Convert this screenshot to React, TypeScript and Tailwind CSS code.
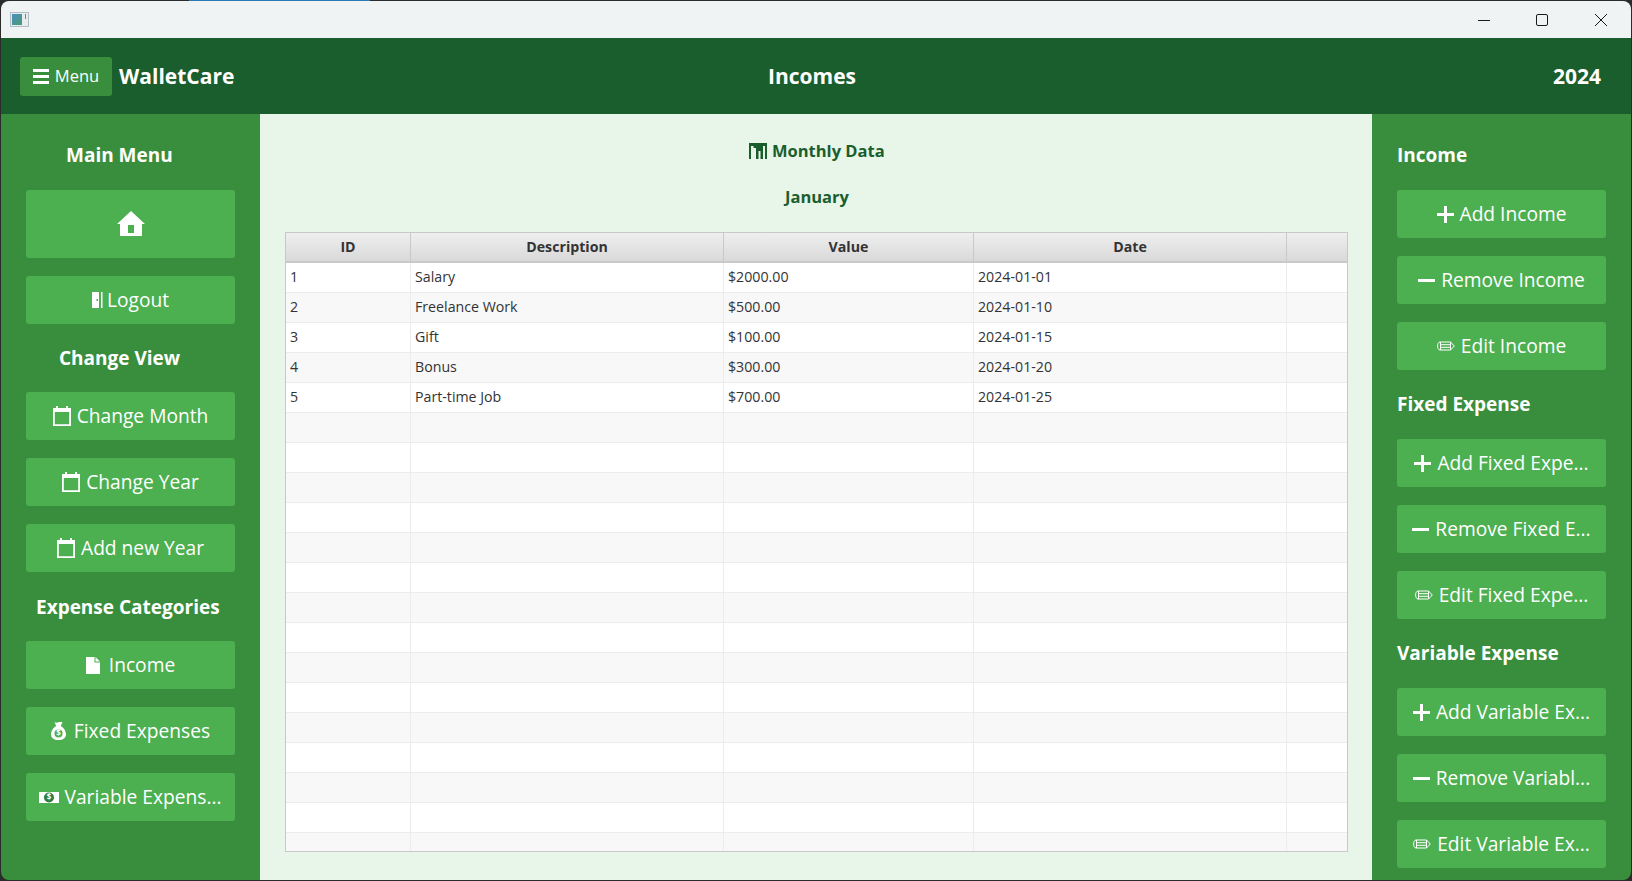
import type { ReactNode } from 'react';

const font = { fontFamily: '"Open Sans", "Noto Sans", sans-serif' };

type IconName = 'home' | 'door' | 'calendar' | 'file' | 'bag' | 'cash' | 'plus' | 'minus' | 'pencil';

function Icon({ name }: { name: IconName }) {
  switch (name) {
    case 'home':
      return (
        <svg width="28" height="26" viewBox="0 0 28 26" fill="#fff">
          <path fillRule="evenodd" d="M14 0 28 13h-3v12H3V13H0ZM11 14v8h6v-8Z" />
        </svg>
      );
    case 'door':
      return (
        <svg width="11" height="16" viewBox="0 0 11 16" fill="#fff">
          <path fillRule="evenodd" d="M0 0h7v16H0ZM4.500 7v2h1.500V7ZM9 0h1.500v16H9Z" />
        </svg>
      );
    case 'calendar':
      return (
        <svg width="18" height="20" viewBox="0 0 18 20" fill="#fff">
          <path fillRule="evenodd" d="M3 0h2v2h8V0h2v2h3v18H0V2h3ZM1.800 6v12.200h14.400V6Z" />
        </svg>
      );
    case 'file':
      return (
        <svg width="14" height="17" viewBox="0 0 14 17" fill="#fff">
          <path d="M0 0h8.500v5.500H14V17H0ZM9.500 0 14 4.500H9.500Z" />
        </svg>
      );
    case 'bag':
      return (
        <svg width="15" height="18" viewBox="0 0 15 18">
          <path fill="#fff" d="M3.500 0c1 .8 2.500.8 4 .3 1.500-.5 3-.5 4-.3L9.800 4c3 1.500 5.200 5 5.200 8.500 0 3.500-3 5.500-7.500 5.500S0 16 0 12.500C0 9 2.200 5.500 5.200 4Z" />
          <circle cx="7.500" cy="11.500" r="4" fill="#4caf50" />
          <text x="7.500" y="14.300" textAnchor="middle" fontSize="8" fontWeight="700" fill="#fff">$</text>
        </svg>
      );
    case 'cash':
      return (
        <svg width="20" height="11" viewBox="0 0 20 11">
          <path fill="#fff" d="M0 0h20v11H0Z" />
          <circle cx="10" cy="5.500" r="5" fill="#2f7d3b" />
          <text x="10" y="8.400" textAnchor="middle" fontSize="8" fontWeight="700" fill="#fff">$</text>
        </svg>
      );
    case 'plus':
      return (
        <svg width="17" height="17" viewBox="0 0 17 17" fill="#fff">
          <path d="M7 0h3v7h7v3h-7v7H7v-7H0V7h7Z" />
        </svg>
      );
    case 'minus':
      return (
        <svg width="17" height="3" viewBox="0 0 17 3" fill="#fff">
          <path d="M0 0h17v3H0Z" />
        </svg>
      );
    case 'pencil':
      return (
        <svg width="18" height="10" viewBox="0 0 18 10" fill="none" stroke="#fff" strokeWidth="1">
          <path d="M3 1h10.500L17.300 5l-3.800 4H3C1.500 9 .6 7 .6 5S1.500 1 3 1ZM3.500 1v8M13.500 1v8M3.500 3.700h10M3.500 6.300h10" />
        </svg>
      );
  }
}

function SideButton({ icon, label, className, gap = 'gap-[6px]' }: { icon: IconName; label?: string; className: string; gap?: string }) {
  return (
    <button
      type="button"
      className={`flex h-[48px] w-[209px] shrink-0 items-center justify-center rounded-[3px] bg-[#4caf50] text-[19.2px] leading-none text-white ${gap} ${className}`}
    >
      <Icon name={icon} />
      {label ? <span className="whitespace-nowrap">{label}</span> : null}
    </button>
  );
}

function SideTitle({ children, className }: { children: ReactNode; className: string }) {
  return <h2 className={`whitespace-nowrap text-[19px] font-bold leading-[26px] text-white ${className}`}>{children}</h2>;
}

const rows = [
  ['1', 'Salary', '$2000.00', '2024-01-01'],
  ['2', 'Freelance Work', '$500.00', '2024-01-10'],
  ['3', 'Gift', '$100.00', '2024-01-15'],
  ['4', 'Bonus', '$300.00', '2024-01-20'],
  ['5', 'Part-time Job', '$700.00', '2024-01-25'],
];

const headers = ['ID', 'Description', 'Value', 'Date', ''];

const allRows = Array.from({ length: 20 }, (_, i) => rows[i] ?? ['', '', '', '']);

export default function App() {
  return (
    <div className="h-[881px] w-[1632px] overflow-hidden bg-[#2b2b2b]" style={font}>
      <div className="h-px pl-[189px]">
        <div className="h-px w-[181px] bg-[#2a7ab8]" />
      </div>
      <div className="ml-px flex h-[879px] w-[1630px] flex-col overflow-hidden rounded-[8px]">
        <div className="flex h-[37px] shrink-0 items-center justify-between bg-[#f0f3f4]">
          <div className="ml-[9px] mt-[-1px] flex h-[15px] w-[19px] items-center gap-[3px] border border-[#b4bcc4] bg-[#e8ecef] pl-px">
            <div className="h-[11px] w-[10px] bg-gradient-to-br from-[#4a90c0] to-[#4e9a70]" />
            <div className="mb-[5px] h-[5px] w-px bg-[#4a90c0]" />
          </div>
          <div className="flex items-center pr-px text-[#1a1a1a]">
            <svg className="ml-px" width="58" height="14" viewBox="0 0 58 14" fill="none" stroke="currentColor"><path d="M0 7.500h12" /></svg>
            <svg width="58" height="14" viewBox="0 0 58 14" fill="none" stroke="currentColor"><rect x=".5" y="1.500" width="11" height="11" rx="1.500" /></svg>
            <svg width="36" height="14" viewBox="0 0 36 14" fill="none" stroke="currentColor"><path d="M1 1l12 12M13 1 1 13" /></svg>
          </div>
        </div>

        <header className="flex h-[76px] shrink-0 items-center bg-[#1b5e2e] text-white">
          <div className="flex w-[767px] items-center pl-[19px]">
            <button type="button" className="flex h-[39px] w-[92px] items-center justify-center gap-[6px] rounded-[3px] bg-[#388e3c] text-[16.500px] text-white">
              <svg width="16" height="15" viewBox="0 0 16 15" fill="#fff"><path d="M0 0h16v3H0ZM0 6h16v3H0ZM0 12h16v3H0Z" /></svg>
              Menu
            </button>
            <span className="ml-[7px] pt-px text-[21px] font-bold">WalletCare</span>
          </div>
          <span className="pt-px text-[21px] font-bold">Incomes</span>
          <span className="ml-auto pr-[30px] pt-px text-[21px] font-bold">2024</span>
        </header>

        <div className="flex min-h-0 flex-1">
          <aside className="flex w-[259px] shrink-0 flex-col bg-[#388e3c] pl-[25px] pt-[28px]">
            <SideTitle className="ml-[40px]">Main Menu</SideTitle>
            <SideButton icon="home" className="mt-[22px] !h-[68px]" />
            <SideButton icon="door" label="Logout" className="mt-[18px]" gap="gap-[4px]" />
            <SideTitle className="ml-[33px] mt-[21px]">Change View</SideTitle>
            <SideButton icon="calendar" label="Change Month" className="mt-[21px]" />
            <SideButton icon="calendar" label="Change Year" className="mt-[18px]" />
            <SideButton icon="calendar" label="Add new Year" className="mt-[18px]" />
            <SideTitle className="ml-[10px] mt-[22px]">Expense Categories</SideTitle>
            <SideButton icon="file" label="Income" className="mt-[21px]" gap="gap-[9px]" />
            <SideButton icon="bag" label="Fixed Expenses" className="mt-[18px]" gap="gap-[8px]" />
            <SideButton icon="cash" label="Variable Expens..." className="mt-[18px]" gap="gap-[5px]" />
          </aside>

          <main className="flex min-w-0 flex-1 flex-col items-start bg-[#e8f5e9] pl-[25px] text-[#1b5e2e]">
            <div className="ml-[464px] mt-[24px] flex h-[26px] items-center gap-[5px] text-[16.500px] font-bold">
              <svg width="18" height="16" viewBox="0 0 18 16" fill="#1b5e2e"><path d="M0 0h18v16h-2V3h-2v13h-2.500V8h-2v8H7V5H5v0H4.500V3H2v13H0Z" /></svg>
              Monthly Data
            </div>
            <div className="ml-[500px] mt-[20px] h-[26px] text-[16.500px] font-bold leading-[26px]">January</div>

            <div className="mt-[22px] h-[620px] w-[1063px] overflow-hidden border border-[#c8c8c8] bg-white text-[14.200px] text-[#333]">
              <div className="grid h-[30px] grid-cols-[125px_313px_250px_313px_1fr] border-b-2 border-[#c8c8c8] bg-gradient-to-b from-[#efefef] to-[#d9d9d9]">
                {headers.map((h, i) => (
                  <div key={i} className="flex items-center justify-center border-r border-[#c8c8c8] font-bold last:border-r-0">
                    {h}
                  </div>
                ))}
              </div>
              {allRows.map((row, r) => (
                <div key={r} className={`grid h-[30px] grid-cols-[125px_313px_250px_313px_1fr] border-b border-[#ececec] ${r % 2 === 0 ? 'bg-white' : 'bg-[#f8f8f8]'}`}>
                  {[...row, ''].map((cell, c) => (
                    <div key={c} className="flex items-center border-r border-[#ececec] pb-[2px] pl-[4px] last:border-r-0">
                      {cell}
                    </div>
                  ))}
                </div>
              ))}
            </div>
          </main>

          <aside className="flex w-[259px] shrink-0 flex-col bg-[#388e3c] pl-[25px] pt-[28px]">
            <SideTitle className="">Income</SideTitle>
            <SideButton icon="plus" label="Add Income" className="mt-[22px]" />
            <SideButton icon="minus" label="Remove Income" className="mt-[18px]" />
            <SideButton icon="pencil" label="Edit Income" className="mt-[18px]" />
            <SideTitle className="mt-[21px]">Fixed Expense</SideTitle>
            <SideButton icon="plus" label="Add Fixed Expe..." className="mt-[22px]" />
            <SideButton icon="minus" label="Remove Fixed E..." className="mt-[18px]" />
            <SideButton icon="pencil" label="Edit Fixed Expe..." className="mt-[18px]" />
            <SideTitle className="mt-[21px]">Variable Expense</SideTitle>
            <SideButton icon="plus" label="Add Variable Ex..." className="mt-[22px]" />
            <SideButton icon="minus" label="Remove Variabl..." className="mt-[18px]" />
            <SideButton icon="pencil" label="Edit Variable Ex..." className="mt-[18px]" />
          </aside>
        </div>
      </div>
    </div>
  );
}
